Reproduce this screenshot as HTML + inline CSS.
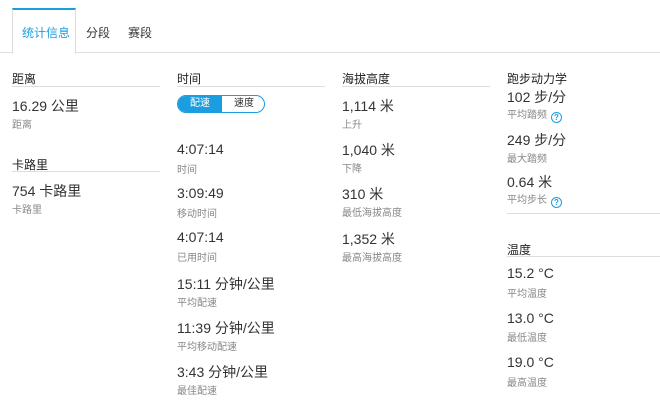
<!DOCTYPE html>
<html><head><meta charset="utf-8"><style>
body{margin:0;width:660px;height:412px;background:#fff;font-family:"Liberation Sans","Noto Sans CJK SC",sans-serif;color:#333;position:relative;overflow:hidden}
.a{position:absolute;white-space:nowrap}
.h{font-size:12px;color:#222}
.ln{position:absolute;height:1px;background:#ddd}
.v{font-size:14px;color:#333}
.l{font-size:10px;color:#888}
.q{display:inline-block;width:9px;height:9px;border:1.3px solid #1a9ee0;border-radius:50%;color:#1a9ee0;font-size:8px;line-height:9px;text-align:center;font-weight:bold;vertical-align:-2px;margin-left:4px}
</style></head><body>
<div class="ln" style="left:0;top:52px;width:660px"></div>
<div class="a" style="left:12px;top:8px;width:64px;height:44px;border-top:2px solid #1a9ee0;border-left:1px solid #ddd;border-right:1px solid #ddd;background:#fff;box-sizing:border-box;height:46px"></div>
<div class="a" style="left:22px;top:24px;font-size:12px;color:#1a9ee0">统计信息</div>
<div class="a" style="left:86px;top:24px;font-size:12px">分段</div>
<div class="a" style="left:128px;top:24px;font-size:12px">赛段</div>

<div class="a h" style="left:12px;top:70px">距离</div><div class="ln" style="left:12px;top:86px;width:148px"></div>
<div class="a v" style="left:12px;top:96px">16.29 公里</div><div class="a l" style="left:12px;top:116px">距离</div>
<div class="a h" style="left:12px;top:156px">卡路里</div><div class="ln" style="left:12px;top:171px;width:148px"></div>
<div class="a v" style="left:12px;top:181px">754 卡路里</div><div class="a l" style="left:12px;top:201px">卡路里</div>

<div class="a h" style="left:177px;top:70px">时间</div><div class="ln" style="left:177px;top:86px;width:148px"></div>
<div class="a" style="left:177px;top:95px;width:88px;height:18px;border:1px solid #1a9ee0;border-radius:10px;box-sizing:border-box;overflow:hidden;font-size:10px">
<div class="a" style="left:0;top:0;width:44px;height:16px;background:#1a9ee0;color:#fff;text-align:center;line-height:16px">配速</div>
<div class="a" style="left:44px;top:0;width:44px;height:16px;color:#333;text-align:center;line-height:16px">速度</div></div>
<div class="a v" style="left:177px;top:141px">4:07:14</div><div class="a l" style="left:177px;top:161px">时间</div>
<div class="a v" style="left:177px;top:185px">3:09:49</div><div class="a l" style="left:177px;top:205px">移动时间</div>
<div class="a v" style="left:177px;top:229px">4:07:14</div><div class="a l" style="left:177px;top:249px">已用时间</div>
<div class="a v" style="left:177px;top:274px">15:11 分钟/公里</div><div class="a l" style="left:177px;top:294px">平均配速</div>
<div class="a v" style="left:177px;top:318px">11:39 分钟/公里</div><div class="a l" style="left:177px;top:338px">平均移动配速</div>
<div class="a v" style="left:177px;top:362px">3:43 分钟/公里</div><div class="a l" style="left:177px;top:382px">最佳配速</div>

<div class="a h" style="left:342px;top:70px">海拔高度</div><div class="ln" style="left:342px;top:86px;width:148px"></div>
<div class="a v" style="left:342px;top:96px">1,114 米</div><div class="a l" style="left:342px;top:116px">上升</div>
<div class="a v" style="left:342px;top:140px">1,040 米</div><div class="a l" style="left:342px;top:160px">下降</div>
<div class="a v" style="left:342px;top:184px">310 米</div><div class="a l" style="left:342px;top:204px">最低海拔高度</div>
<div class="a v" style="left:342px;top:229px">1,352 米</div><div class="a l" style="left:342px;top:249px">最高海拔高度</div>

<div class="a h" style="left:507px;top:70px">跑步动力学</div>
<div class="a v" style="left:507px;top:87px">102 步/分</div><div class="a l" style="left:507px;top:106px">平均踏频<span class="q">?</span></div>
<div class="a v" style="left:507px;top:130px">249 步/分</div><div class="a l" style="left:507px;top:150px">最大踏频</div>
<div class="a v" style="left:507px;top:172px">0.64 米</div><div class="a l" style="left:507px;top:191px">平均步长<span class="q">?</span></div>
<div class="ln" style="left:507px;top:213px;width:153px"></div>
<div class="a h" style="left:507px;top:241px">温度</div><div class="ln" style="left:507px;top:256px;width:153px"></div>
<div class="a v" style="left:507px;top:265px">15.2 °C</div><div class="a l" style="left:507px;top:285px">平均温度</div>
<div class="a v" style="left:507px;top:310px">13.0 °C</div><div class="a l" style="left:507px;top:329px">最低温度</div>
<div class="a v" style="left:507px;top:354px">19.0 °C</div><div class="a l" style="left:507px;top:374px">最高温度</div>
</body></html>
